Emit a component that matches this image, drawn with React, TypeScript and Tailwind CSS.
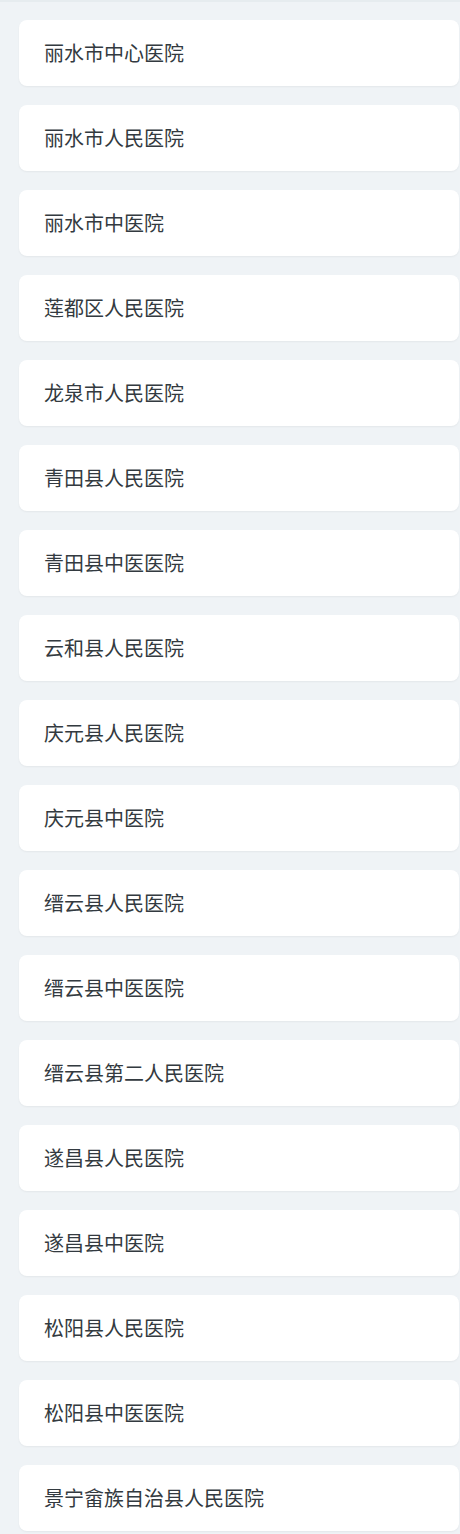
const hospitals = [
  "丽水市中心医院",
  "丽水市人民医院",
  "丽水市中医院",
  "莲都区人民医院",
  "龙泉市人民医院",
  "青田县人民医院",
  "青田县中医医院",
  "云和县人民医院",
  "庆元县人民医院",
  "庆元县中医院",
  "缙云县人民医院",
  "缙云县中医医院",
  "缙云县第二人民医院",
  "遂昌县人民医院",
  "遂昌县中医院",
  "松阳县人民医院",
  "松阳县中医医院",
  "景宁畲族自治县人民医院",
];

export default function App() {
  return (
    <div
      className="min-h-[1534px] w-[460px] border-t-2 border-[#e6ecef] bg-[#eff3f6] pt-[18px]"
      style={{ fontFamily: '"Noto Sans CJK SC", "Noto Sans", sans-serif' }}
    >
      <div className="flex flex-col gap-[19px]">
        {hospitals.map((name) => (
          <div
            key={name}
            className="ml-[19px] flex h-[66px] w-[440px] items-center rounded-lg bg-white pl-[25px] shadow-[0_1px_2px_rgba(0,0,0,0.05)]"
          >
            <span className="text-[20px] leading-none text-[#333a40]">{name}</span>
          </div>
        ))}
      </div>
    </div>
  );
}
